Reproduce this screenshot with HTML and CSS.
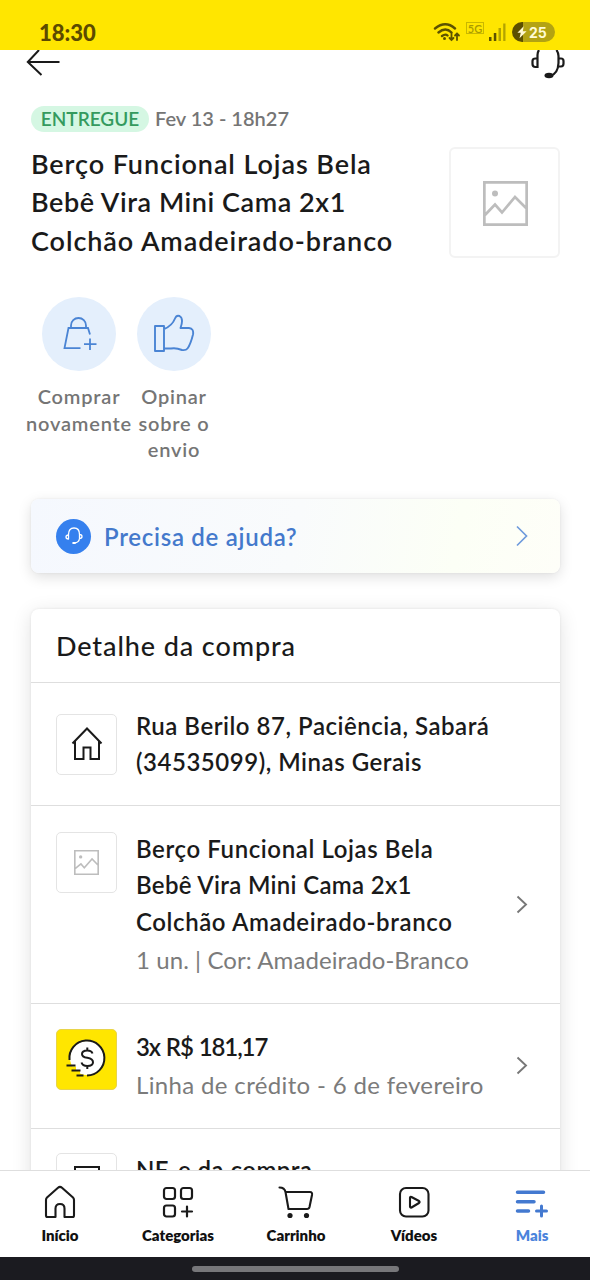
FILE: index.html
```html
<!DOCTYPE html>
<html lang="pt-BR">
<head>
<meta charset="utf-8">
<title>Detalhe da compra</title>
<link rel="stylesheet" href="styles.css">
</head>
<body>
<div class="screen">
  <header class="status">
    <span class="clock">18:30</span>
    <div class="status-icons">
      <svg class="wifi" width="28" height="22" viewBox="0 0 28 22" fill="none" stroke="#5c5200" stroke-width="2.400" stroke-linecap="round">
        <path d="M2 6.500Q12.500-1.800 22 6.500M5.500 10.500Q12.500 4.500 18.500 10.500M9 14Q12.500 11.500 14.500 13.500"/>
        <circle cx="11.500" cy="16.500" r="1.500" fill="#5c5200" stroke="none"/>
        <path stroke-width="1.800" d="M18.500 11.500v6.500m-2-2 2 2 2-2M24 18v-6.500m-2 2 2-2 2 2"/>
      </svg>
      <span class="net">5G</span>
      <svg class="signal" width="18" height="20" viewBox="0 0 18 20">
        <path fill="#5c5200" d="M1 15h2.500v4H1zM5.800 11h2.500v8H5.800z"/>
        <path fill="#b3a300" d="M10.500 6H13v13h-2.500zM15.200 1.500h2.300V19h-2.300z"/>
      </svg>
      <span class="battery">
        <svg width="10" height="16" viewBox="0 0 12 16"><path fill="#fff9d0" d="M8 1 .5 9h4L3 15.500 11.500 7H7z"/></svg>25
      </span>
    </div>
  </header>

  <main class="content">
    <div class="topbar">
      <svg width="34" height="28" viewBox="0 0 34 28" fill="none" stroke="#1a1a1a" stroke-width="2"><path d="M13 0 1.800 12 15.500 25M1.800 12H33.500"/></svg>
      <svg width="36" height="30" viewBox="0 0 36 30" fill="none" stroke="#1a1a1a" stroke-width="2.200">
        <path d="M9 0Q7.500 2 7.500 5V17H5.500Q2.500 17 2.500 14V11Q2.500 8.500 5.500 8.500H7.500"/>
        <path d="M26.500 0Q28.500 3 28.500 6V13Q28 24 20 26M28.500 8.500H31Q33.500 8.500 33.500 11V13.500Q33.500 16.500 31 16.500H28.500"/>
        <ellipse cx="19" cy="25.500" rx="4.500" ry="2.800" fill="#1a1a1a" stroke="none"/>
      </svg>
    </div>

    <section class="summary">
      <div class="summary-text">
        <div class="delivery"><span class="badge">ENTREGUE</span><span class="date">Fev 13 - 18h27</span></div>
        <h1 class="title"><span class="t1">Berço Funcional Lojas Bela</span><br><span class="t2">Bebê Vira Mini Cama 2x1</span><br><span class="t3">Colchão Amadeirado-branco</span></h1>
      </div>
      <div class="photo">
        <svg width="45" height="45" viewBox="0 0 45 45" fill="none" stroke="#bdbdbd" stroke-width="2.700">
          <path d="M1.350 1.350h42.300v42.300H1.350zM1.500 34.500l10.500-11 7 8L32 16 43.500 27.500"/><circle cx="12" cy="12.500" r="3" fill="#bdbdbd" stroke="none"/>
        </svg>
      </div>
    </section>

    <section class="actions">
      <div class="action">
        <span class="circle">
          <svg width="40" height="40" viewBox="0 0 40 40" fill="none" stroke="#4a84d4" stroke-width="1.800">
            <path d="M12 14V11.500A7.500 7.500 0 0 1 27 11.500V14M21.500 34.200H5.500L9.500 14H29L31 20.500"/><path d="M31 24.500V36M25 30.200H37.500"/>
          </svg>
        </span>
        <span class="action-label">Comprar<br>novamente</span>
      </div>
      <div class="action">
        <span class="circle">
          <svg width="42" height="40" viewBox="0 0 42 40" fill="none" stroke="#4a84d4" stroke-width="1.900" stroke-linejoin="round">
            <path d="M2 12h9v25H2zM11 15Q19 12 22 4.500Q23.500.800 26.500 2Q31 4.500 27.500 14H36Q41 14.500 40 20.500Q37.500 30.500 34.500 34.500Q33 36.500 29 36Q23 33.500 18 34.500H11"/>
          </svg>
        </span>
        <span class="action-label">Opinar<br>sobre o<br>envio</span>
      </div>
    </section>

    <section class="help">
      <span class="help-icon">
        <svg width="20" height="20" viewBox="0 0 20 20" fill="none" stroke="#fff" stroke-width="1.300" stroke-linecap="round"><path d="M4.500 13V8.500Q4.500 2 10 2T15.500 8.500V12.500Q15 16.500 10.500 17M4.500 9Q2 9 2 11T4.500 13M15.500 8.500Q18 8.500 18 10.500T15.500 12.500"/><path stroke-width="2.200" d="M9.300 17h1.500"/></svg>
      </span>
      <span class="help-text">Precisa de ajuda?</span>
      <svg class="chev" width="14" height="22" viewBox="0 0 14 22" fill="none" stroke="#6f9bdc" stroke-width="1.700"><path d="M2 1.500l9.500 9.500L2 20.500"/></svg>
    </section>

    <section class="card">
      <h2 class="card-title">Detalhe da compra</h2>
      <div class="row row-address">
        <span class="tile">
          <svg width="32" height="36" viewBox="0 0 32 36" fill="none" stroke="#1a1a1a" stroke-width="2"><path d="M1.500 16.500 16 1.500 30.500 16.500M4 14V32h8.500V20.500h7V32H28V14"/></svg>
        </span>
        <div class="row-text"><p><span class="a1">Rua Berilo 87, Paciência, Sabará</span><br><span class="a2">(34535099), Minas Gerais</span></p></div>
      </div>
      <div class="row row-product">
        <span class="tile">
          <svg width="25" height="25" viewBox="0 0 45 45" fill="none" stroke="#bdbdbd" stroke-width="2.900"><path d="M1.450 1.450h42.100v42.100H1.450zM1.500 34l11-9 6 7L32.500 16 43.500 27.500"/><circle cx="12" cy="12.500" r="3" fill="#bdbdbd" stroke="none"/></svg>
        </span>
        <div class="row-text"><p><span class="p1">Berço Funcional Lojas Bela</span><br><span class="p2">Bebê Vira Mini Cama 2x1</span><br><span class="p3">Colchão Amadeirado-branco</span></p><p class="sub s1">1 un. | Cor: Amadeirado-Branco</p></div>
        <svg class="chev" width="14" height="20" viewBox="0 0 14 20" fill="none" stroke="#777" stroke-width="1.900"><path d="M2.500 1.500l8.500 8-8.500 8"/></svg>
      </div>
      <div class="row row-payment">
        <span class="tile tile-yellow">
          <svg width="42" height="42" viewBox="0 0 42 42" fill="none" stroke="#1a1a1a" stroke-width="2"><circle cx="21" cy="20" r="17" fill="#fff" stroke="none"/><path stroke="#ffe600" stroke-width="4" d="M1 30.500h9M5 35h9"/><path d="M3.500 22A17.500 17.500 0 1 1 21 37.500M.500 27.500h9M5.500 32.500h9M10.500 37.500h7"/><path stroke-width="2" d="M26.500 15.500Q25.500 12.500 21.300 12.500Q16 12.500 16 16Q16 19 21.300 19.800Q27 20.700 27 24.300Q27 28 21.300 28Q16.500 28 15.500 24.500M21.300 9.500v3M21.300 28v3"/></svg>
        </span>
        <div class="row-text"><p class="c1">3x R$ 181,17</p><p class="sub s2">Linha de crédito - 6 de fevereiro</p></div>
        <svg class="chev" width="14" height="20" viewBox="0 0 14 20" fill="none" stroke="#777" stroke-width="1.900"><path d="M2.500 1.500l8.500 8-8.500 8"/></svg>
      </div>
      <div class="row row-invoice">
        <span class="tile"><svg width="26" height="36" viewBox="0 0 26 36" fill="none" stroke="#1a1a1a" stroke-width="2"><path d="M1 1h24v34H1z"/></svg></span>
        <div class="row-text"><p class="n1">NF-e da compra</p></div>
      </div>
    </section>
  </main>

  <nav class="tabs">
    <a class="tab"><svg width="34" height="36" viewBox="0 0 34 36" fill="none" stroke="#1a1a1a" stroke-width="2.100" stroke-linejoin="round"><path d="M4.500 33Q3 33 3 31.500V16Q3 14.500 4 13.500L15 3.800Q17 2 19 3.800L30 13.500Q31 14.500 31 16V31.500Q31 33 29.500 33H21.500V24.500Q21.500 20 17 20T12.500 24.500V33z"/></svg><span>Início</span></a>
    <a class="tab"><svg width="34" height="36" viewBox="0 0 34 36" fill="none" stroke="#1a1a1a" stroke-width="2.200"><rect x="3" y="4" width="11" height="11" rx="2.500"/><rect x="20" y="4" width="11" height="11" rx="2.500"/><rect x="3" y="21.500" width="11" height="11" rx="2.500"/><path stroke-linecap="round" d="M26 22.500v10M21 27.500h10"/></svg><span>Categorias</span></a>
    <a class="tab"><svg width="36" height="36" viewBox="0 0 36 36" fill="none" stroke="#1a1a1a" stroke-width="2.100" stroke-linejoin="round"><path stroke-linecap="round" d="M1.500 3.500Q6.500 3.500 7.500 8L10.500 25H29Q31 25 31.500 23L34 11Q34.500 8 32 8H7.500"/><circle cx="12" cy="31.500" r="2.600" fill="#1a1a1a" stroke="none"/><circle cx="28.500" cy="31.500" r="2.600" fill="#1a1a1a" stroke="none"/></svg><span>Carrinho</span></a>
    <a class="tab"><svg width="34" height="36" viewBox="0 0 34 36" fill="none" stroke="#1a1a1a" stroke-width="2.100" stroke-linejoin="round"><rect x="3" y="4" width="28.500" height="28.500" rx="6"/><path d="M13 13.800Q13 12.500 14.500 13L22 17Q23.200 18 22 19L14.500 23.500Q13 24 13 22.500z"/></svg><span>Vídeos</span></a>
    <a class="tab tab-active"><svg width="34" height="36" viewBox="0 0 34 36" fill="none" stroke="#4379d0" stroke-width="3.500" stroke-linecap="round"><path d="M2.500 8.300h26M2.500 17.700h16.500M2.500 27h11"/><path stroke-width="3" d="M26.500 22v10M21.500 27h10"/></svg><span>Mais</span></a>
  </nav>
  <footer class="home"><span class="handle"></span></footer>
</div>
</body>
</html>
```
FILE: styles.css
```css
* { box-sizing: border-box; }
body, h1, h2, p { margin: 0; }
body { background: #fff; color: #1a1a1a; font-family: Lato, "Open Sans", sans-serif; font-weight: 600; }
svg { display: block; flex: none; }
.screen { width: 590px; height: 1280px; display: flex; flex-direction: column; overflow: hidden; }

.status { flex: none; height: 50px; padding: 15px 35px 0 39px; background: #ffe600; display: flex; justify-content: space-between; align-items: flex-start; color: #5c4a00; }
.clock { font-size: 22px; line-height: 36px; font-weight: 900; }
.status-icons { display: flex; align-items: flex-start; padding-top: 7px; }
.wifi { margin: 0 5px 0 -1px; }
.net { width: 18px; height: 12px; border: 1px solid #c9b800; color: #a99a00; font-size: 11px; line-height: 11px; text-align: center; font-weight: 600; }
.signal { margin: 0 6px 0 4px; }
.battery { display: flex; align-items: center; gap: 2px; width: 43px; height: 20px; padding-left: 5px; border-radius: 10px; background: linear-gradient(90deg, #5c5000 11px, #b3a312 11px); color: #fffbd5; font-family: Inter, sans-serif; font-size: 14px; font-weight: 700; }

.content { flex: 1; min-height: 0; overflow: hidden; }
.topbar { display: flex; justify-content: space-between; height: 56px; padding: 0 24px 0 26px; }
.summary { display: flex; justify-content: space-between; padding: 0 30px 0 31px; height: 153px; }
.delivery { display: flex; align-items: center; height: 26px; margin-bottom: 13px; }
.badge { width: 118px; height: 26px; margin-right: 6px; border-radius: 13px; background: #d5f7e3; color: #349a5e; font-size: 19px; line-height: 25px; text-align: center; }
.date { color: #757575; font-size: 20px; line-height: 25px; height: 26px; }
.title { font-size: 27px; line-height: 38.400px; font-weight: 600; white-space: nowrap; }
.t1 { letter-spacing: .920px; }
.t2 { letter-spacing: .560px; }
.t3 { letter-spacing: .920px; }
.photo { width: 111px; height: 111px; margin-top: 41px; padding: 1px 0 0 1px; border: 2px solid #f3f3f3; border-radius: 6px; display: flex; align-items: center; justify-content: center; }

.actions { display: flex; height: 240px; padding: 38px 0 0 31px; }
.action { width: 95px; display: flex; flex-direction: column; align-items: center; gap: 12px; color: #757575; font-size: 20px; line-height: 26.500px; text-align: center; letter-spacing: .800px; }
.action-label { white-space: nowrap; padding-left: 1px; }
.circle { width: 74px; height: 74px; border-radius: 50%; background: #e4effc; display: flex; align-items: center; justify-content: center; }

.help { height: 74px; margin: 0 30px 36px 31px; padding: 0 31px 0 25px; display: flex; align-items: center; border-radius: 8px; background: linear-gradient(100deg, #f5f8fe, #f9fbfc 50%, #fcfff6 80%, #fefef8); box-shadow: 0 4px 14px rgba(0,0,0,.13), 0 0 2px rgba(0,0,0,.08); color: #4479cc; font-size: 24px; }
.help-icon { width: 35px; height: 35px; margin-right: 13px; border-radius: 50%; background: #3580ee; display: flex; align-items: center; justify-content: center; }
.help-text { letter-spacing: .720px; }
.chev { margin-left: auto; }

.card { margin: 0 30px 0 31px; height: 640px; border-radius: 8px; background: #fff; box-shadow: 0 4px 20px rgba(0,0,0,.12), 0 0 3px rgba(0,0,0,.08); }
.card-title { height: 74px; padding-left: 25px; border-bottom: 1px solid #dedede; font-size: 27px; line-height: 74px; font-weight: 500; letter-spacing: .900px; }
.row { display: flex; align-items: flex-start; padding: 0 31px 0 25px; border-bottom: 1px solid #dedede; white-space: nowrap; font-size: 24px; line-height: 36.300px; }
.row-address { height: 123px; padding-top: 31px; }
.row-product { height: 198px; padding-top: 26px; padding-bottom: 26px; }
.row-payment { height: 125px; padding-top: 25px; padding-bottom: 25px; }
.row-invoice { border: 0; padding-top: 24px; }
.row .chev { align-self: center; }
.tile { flex: none; width: 61px; height: 61px; margin-right: 19px; border: 1px solid #e4e4e4; border-radius: 5px; display: flex; align-items: center; justify-content: center; }
.tile-yellow { background: #ffe600; border-color: #e8d44a; padding-bottom: 2px; }
.row-address .row-text { margin-top: -6px; }
.row-product .row-text { margin-top: -1px; }
.row-invoice .row-text { margin-top: -1px; }
.a1, .a2 { letter-spacing: .530px; }
.p1, .p3 { letter-spacing: .600px; }
.p2 { letter-spacing: .320px; }
.c1 { letter-spacing: -1.100px; word-spacing: 1px; }
.n1 { letter-spacing: .450px; }
.sub { color: #7b7b7b; font-weight: 400; line-height: 40px; }
.s1 { letter-spacing: .080px; }
.s2 { letter-spacing: .350px; }

.tabs { flex: none; height: 87px; border-top: 1px solid #dedede; background: #fff; display: grid; grid-template-columns: repeat(5, 118px); padding-left: 1px; }
.tab { display: flex; flex-direction: column; align-items: center; padding-top: 13px; color: #111; font-size: 15px; line-height: 20px; font-weight: 800; gap: 5px; }
.tab-active { color: #4b84dc; }
.home { flex: none; height: 23px; background: #1b1b20; display: flex; justify-content: center; padding-top: 9px; }
.handle { width: 207px; height: 6px; border-radius: 3px; background: #77777a; }
```
